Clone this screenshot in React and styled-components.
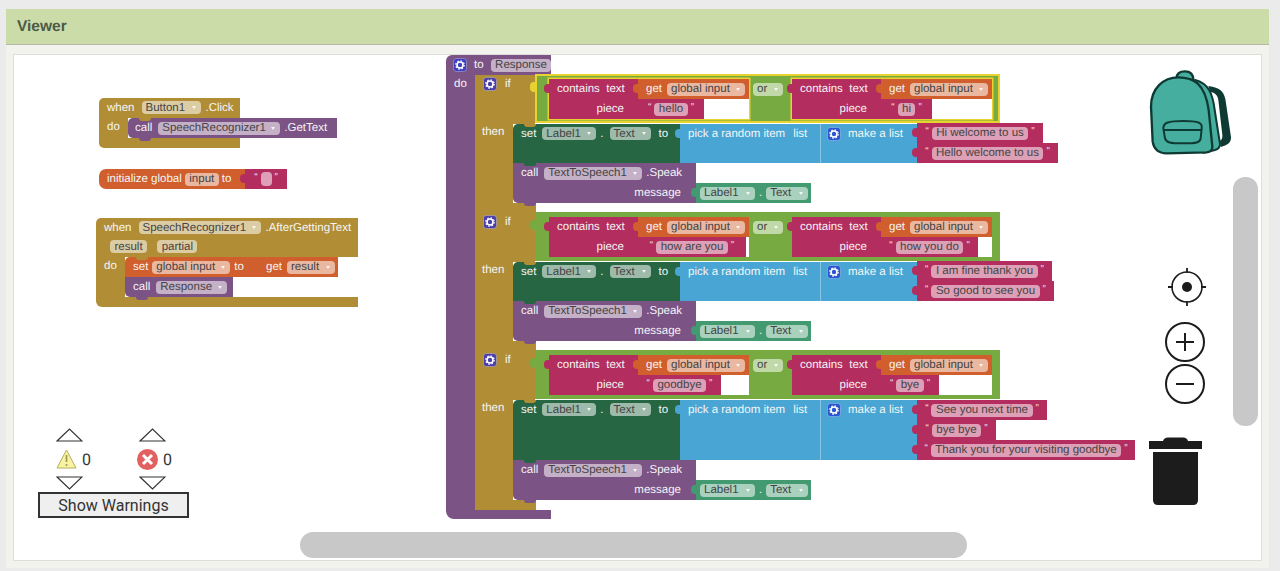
import React from "react";
import styled, { createGlobalStyle, css } from "styled-components";

const CONTROL = "#b18e35";
const PROC = "#7c5385";
const VAR = "#d05f2d";
const TEXT = "#b32d5e";
const LOGIC = "#77ab41";
const SET = "#266643";
const GETTER = "#439970";
const LIST = "#49a6d4";

const GlobalStyle = createGlobalStyle`
  body {
    margin: 0;
    background: #ebebeb;
    font-family: "Liberation Sans", Arial, sans-serif;
    text-rendering: geometricPrecision;
  }
`;

const Frame = styled.div`
  width: 1263px;
  height: 559px;
  margin: 9px 0 0 6px;
  background: #f3f3ee;
`;

const Header = styled.div`
  height: 36px;
  box-sizing: border-box;
  padding-left: 11px;
  display: flex;
  align-items: center;
  background: #cbdca8;
  border-bottom: 1px solid #b4b8a8;
  color: #4c5a48;
  font-size: 15.5px;
  font-weight: bold;
`;

const Workspace = styled.div`
  position: relative;
  width: 1247px;
  height: 505px;
  margin: 10px 0 0 8px;
  background: #fff;
  box-shadow: 0 0 0 1px #dfdfda;
  overflow: hidden;
`;

const Placed = styled.div`
  position: absolute;
  left: ${(p) => p.$x}px;
  top: ${(p) => p.$y}px;
`;

const Stack = styled.div`
  display: flex;
  flex-direction: column;
  align-items: flex-start;
  flex: none;
  margin-top: ${(p) => p.$lift || 0}px;
`;

const Line = styled.div`
  display: flex;
  align-items: stretch;
  flex: none;
`;

const Slab = styled.div`
  position: relative;
  flex: none;
  box-sizing: border-box;
  display: flex;
  align-items: ${(p) => (p.$top !== undefined ? "flex-start" : "center")};
  justify-content: ${(p) => p.$justify || "flex-start"};
  gap: ${(p) => p.$gap ?? 6}px;
  width: ${(p) => p.$w}px;
  height: ${(p) => (p.$h ? `${p.$h}px` : "auto")};
  padding: ${(p) => p.$top ?? 0}px ${(p) => p.$padR ?? 0}px ${(p) => p.$padB ?? 0}px ${(p) => p.$padL ?? 8}px;
  background: ${(p) => p.$bg};
  border-radius: ${(p) => p.$radius || 0};
  border-left: ${(p) => (p.$seam ? "1px solid rgba(255,255,255,.35)" : "none")};
  color: #f5f5f5;
  font-size: 11.5px;
  line-height: 14px;
  white-space: nowrap;

  ${(p) =>
    p.$tab &&
    css`
      &::before {
        content: "";
        position: absolute;
        left: -5px;
        top: 5px;
        width: 5px;
        height: 9px;
        background: ${p.$bg};
        border-radius: 4px 0 0 4px;
      }
    `}

  ${(p) =>
    p.$notch &&
    css`
      &::after {
        content: "";
        position: absolute;
        left: 11px;
        bottom: -3px;
        width: 12px;
        height: 3px;
        background: ${p.$bg};
        border-radius: 0 0 6px 6px;
        z-index: 2;
      }
    `}
`;

const Dent = styled.span`
  position: absolute;
  left: 11px;
  top: 0;
  width: 12px;
  height: 3px;
  background: ${(p) => p.$bg};
  border-radius: 0 0 6px 6px;
`;

const Suffix = styled.span`
  margin-left: -2px;
`;

const Spaced = styled.span`
  margin-left: 2px;
`;

const Chip = styled.span`
  display: inline-flex;
  align-items: center;
  flex: none;
  height: ${(p) => p.$h || 13}px;
  min-width: ${(p) => p.$min || 0}px;
  box-sizing: border-box;
  padding: 0 4.5px;
  border-radius: 4px;
  background: rgba(255, 255, 255, 0.55);
  color: #444;
`;

const Caret = styled.span`
  width: 0;
  height: 0;
  margin-left: auto;
  border-left: 2.5px solid transparent;
  border-right: 2.5px solid transparent;
  border-top: 3px solid rgba(255, 255, 255, 0.85);
`;

const FieldLabel = styled.span`
  margin-right: 5px;
`;

const FieldChip = styled(Chip)`
  padding: 0 5px 0 4px;
`;

const Quote = styled.span`
  font-size: 10px;
  line-height: 10px;
  margin-top: -3px;
`;

const Hole = styled.div`
  flex: none;
  width: ${(p) => p.$w}px;
  height: 20px;
  background: #fff;
`;

const GearBox = styled.svg`
  flex: none;
  width: 14px;
  height: 14px;
  display: block;
`;

const ConditionFrame = styled.div`
  position: relative;
  flex: none;
  box-sizing: border-box;
  display: flex;
  align-items: flex-start;
  width: 465px;
  height: 49px;
  margin-top: -1px;
  padding: 3px 0 0 12px;
  background: ${LOGIC};
  border: 2px solid ${(p) => (p.$selected ? "#e6d32f" : LOGIC)};

  &::before {
    content: "";
    position: absolute;
    left: -7px;
    top: 6px;
    width: 5px;
    height: 10px;
    background: ${(p) => (p.$selected ? "#e6d32f" : LOGIC)};
    border-radius: 4px 0 0 4px;
  }
`;

const ContainsGroup = styled.div`
  display: flex;
  flex: none;
  box-shadow: ${(p) => (p.$selected ? "0 0 0 1.5px #e6d32f" : "none")};
`;

const OrSlot = styled.div`
  flex: none;
  width: 43px;
  height: 20px;
  display: flex;
  align-items: center;
  padding-left: 4px;
  box-sizing: border-box;
  font-size: 11.5px;
`;

const WarnPanel = styled.div`
  position: absolute;
  left: 24px;
  top: 373px;
  width: 151px;
  display: flex;
  flex-direction: column;
`;

const Counters = styled.div`
  display: flex;
  padding-left: 18px;
`;

const Counter = styled.div`
  flex: none;
  width: 83px;
  display: flex;
  flex-direction: column;
  align-items: flex-start;
`;

const Arrow = styled.svg`
  display: block;
  width: 27px;
  height: 14px;
`;

const Status = styled.div`
  display: flex;
  align-items: center;
  height: 34px;
  margin-left: ${(p) => p.$shift || 0}px;
  gap: 5px;
  color: #333;
  font-family: Roboto, sans-serif;
  font-size: 16px;
`;

const ShowWarnings = styled.button`
  box-sizing: border-box;
  width: 151px;
  height: 26px;
  margin-top: 2px;
  padding: 0;
  background: #efefef;
  border: 2px solid #333;
  border-radius: 0;
  color: #333;
  font-family: Roboto, sans-serif;
  font-size: 16px;
`;

const Rail = styled.div`
  position: absolute;
  left: 1132px;
  top: 13px;
  width: 88px;
  display: flex;
  flex-direction: column;
  align-items: flex-start;
`;

const RailIcon = styled.svg`
  display: block;
  flex: none;
  margin: ${(p) => p.$top || 0}px 0 0 ${(p) => p.$left || 0}px;
`;

const VerticalThumb = styled.div`
  position: absolute;
  left: 1219px;
  top: 122px;
  width: 25px;
  height: 249px;
  border-radius: 12px;
  background: #c8c8c8;
`;

const HorizontalThumb = styled.div`
  position: absolute;
  left: 286px;
  top: 477px;
  width: 667px;
  height: 26px;
  border-radius: 13px;
  background: #c8c8c8;
`;

const Gear = ({ fill }) => (
  <GearBox viewBox="0 0 14 14">
    <rect x="0.5" y="0.5" width="13" height="13" rx="3" fill={fill} stroke="rgba(255,255,255,.3)" />
    <circle cx="7" cy="7" r="3" fill="none" stroke="#fff" strokeWidth="1.6" />
    <circle cx="7" cy="7" r="4.2" fill="none" stroke="#fff" strokeWidth="1.2" strokeDasharray="1.6 1.7" />
  </GearBox>
);

const Field = ({ children, min }) => (
  <FieldChip $min={min}>
    <FieldLabel>{children}</FieldLabel>
    <Caret />
  </FieldChip>
);

const TextBlock = ({ w, text, tab }) => (
  <Slab $w={w} $h={20} $bg={TEXT} $padL={0} $gap={3} $justify="center" $tab={tab}>
    <Quote>“</Quote>
    <Chip>{text}</Chip>
    <Quote>”</Quote>
  </Slab>
);

const Contains = ({ selected, text, w }) => (
  <ContainsGroup $selected={selected}>
    <Stack>
      <Slab $w={89} $h={20} $bg={TEXT} $tab $padL={8}>
        contains&nbsp; text
      </Slab>
      <Slab $w={89} $h={20} $bg={TEXT} $justify="flex-end" $padR={14}>
        piece
      </Slab>
    </Stack>
    <Stack>
      <Slab $w={111} $h={20} $bg={VAR} $tab $gap={5}>
        get <Field min={78}>global input</Field>
      </Slab>
      <Line>
        <TextBlock w={w} text={text} />
        <Hole $w={111 - w} />
      </Line>
    </Stack>
  </ContainsGroup>
);

const Getter = () => (
  <Slab $w={115} $h={20} $bg={GETTER} $tab $padL={4} $gap={4}>
    <Field min={55}>Label1</Field>
    <span>.</span>
    <Field min={42}>Text</Field>
  </Slab>
);

const IfSection = ({ section }) => (
  <Stack>
    <Line>
      <Slab $w={60} $h={49} $bg={CONTROL} $top={2} $padL={8} $gap={8}>
        <Gear fill="#4a3fa8" />
        if
      </Slab>
      <ConditionFrame $selected={section.selected}>
        <Contains selected={section.selected} text={section.left.text} w={section.left.w} />
        <OrSlot>
          <Field min={30}>or</Field>
        </OrSlot>
        <Contains selected={section.selected} text={section.right.text} w={section.right.w} />
      </ConditionFrame>
    </Line>
    <Line>
      <Slab $w={38} $bg={CONTROL} $top={1} $padL={7}>
        then
      </Slab>
      <Stack>
        <Line>
          <Slab $w={167} $h={section.setH} $bg={SET} $top={3} $radius="5px 0 0 0" $notch>
            <Dent $bg={CONTROL} />
            set <Field min={54}>Label1</Field>
            <Suffix>.</Suffix>
            <Field min={41}>Text</Field>
            <Spaced>to</Spaced>
          </Slab>
          <Slab $w={140} $h={section.setH} $bg={LIST} $top={3} $tab $gap={8}>
            <span>pick a random item</span>
            <span>list</span>
          </Slab>
          <Slab $w={97} $h={section.setH} $bg={LIST} $top={3} $seam $padL={6} $gap={7}>
            <Gear fill="#2b55d0" />
            make a list
          </Slab>
          <Stack $lift={section.lift}>
            {section.items.map((item) => (
              <TextBlock key={item.text} w={item.w} text={item.text} tab />
            ))}
          </Stack>
        </Line>
        <Slab $w={183} $h={20} $bg={PROC}>
          <Dent $bg={SET} />
          call <Field min={98}>TextToSpeech1</Field>
          <Suffix>.Speak</Suffix>
        </Slab>
        <Line>
          <Slab $w={183} $h={20} $bg={PROC} $justify="flex-end" $padR={15} $radius="0 0 0 5px" $notch>
            message
          </Slab>
          <Getter />
        </Line>
      </Stack>
    </Line>
    <Slab $w={61} $h={10} $bg={CONTROL} />
  </Stack>
);

const sections = [
  {
    selected: true,
    lift: -1,
    setH: 39,
    left: { text: "hello", w: 66 },
    right: { text: "hi", w: 51 },
    items: [
      { text: "Hi welcome to us", w: 126 },
      { text: "Hello welcome to us", w: 141 },
    ],
  },
  {
    lift: -1,
    setH: 39,
    left: { text: "how are you", w: 108 },
    right: { text: "how you do", w: 97 },
    items: [
      { text: "I am fine thank you", w: 135 },
      { text: "So good to see you", w: 137 },
    ],
  },
  {
    lift: 0,
    setH: 60,
    left: { text: "goodbye", w: 83 },
    right: { text: "bye", w: 58 },
    items: [
      { text: "See you next time", w: 130 },
      { text: "bye bye", w: 79 },
      { text: "Thank you for your visiting goodbye", w: 218 },
    ],
  },
];

const Backpack = () => (
  <RailIcon width="88" height="90" viewBox="48 54 264 270">
    <path
      d="M235 108 C270 112 285 125 288 160 L303 262 C304 277 292 287 272 291 L270 272 C275 270 278 264 277 255 L265 150 C263 135 255 128 240 125 Z"
      fill="#0f3a33"
    />
    <path
      d="M140 84 C140 70 150 64 165 64 C180 64 190 72 190 90 Z"
      fill="#46ae9f"
      stroke="#0f3a33"
      strokeWidth="7"
    />
    <path
      d="M195 90 C235 100 248 130 254 180 L270 282 Q270 296 255 300 L220 308 Z"
      fill="#46ae9f"
      stroke="#0f3a33"
      strokeWidth="6"
      strokeLinejoin="round"
    />
    <path
      d="M63 170 C63 115 100 82 145 82 C190 82 225 100 236 180 L247 290 Q248 305 230 307 L110 310 C85 310 72 300 68 275 Z"
      fill="#46ae9f"
      stroke="#0f3a33"
      strokeWidth="7"
      strokeLinejoin="round"
    />
    <path
      d="M100 235 C100 218 115 213 160 213 C205 213 218 218 215 235 L212 265 C210 278 200 280 160 280 C120 280 108 278 105 265 Z"
      fill="#46ae9f"
      stroke="#0f3a33"
      strokeWidth="6"
    />
    <path d="M102 240 L215 240" stroke="#0f3a33" strokeWidth="6" />
  </RailIcon>
);

const UpArrow = () => (
  <Arrow viewBox="0 0 27 14">
    <path d="M1 13 L13.5 1 L26 13 Z" fill="none" stroke="#333" strokeWidth="1.2" />
  </Arrow>
);

const DownArrow = () => (
  <Arrow viewBox="0 0 27 14">
    <path d="M1 1 L13.5 13 L26 1 Z" fill="none" stroke="#333" strokeWidth="1.2" />
  </Arrow>
);

export default function App() {
  return (
    <>
      <GlobalStyle />
      <Frame>
        <Header>Viewer</Header>
        <Workspace>
          <Placed $x={85} $y={43}>
            <Stack>
              <Slab $w={141} $h={20} $bg={CONTROL} $radius="5px 0 0 0" $gap={7} $padB={1}>
                when <Field min={59}>Button1</Field>
                <Suffix>.Click</Suffix>
              </Slab>
              <Line>
                <Slab $w={29} $h={20} $bg={CONTROL} $padB={2}>
                  do
                </Slab>
                <Slab $w={209} $h={20} $bg={PROC} $radius="5px 0 0 5px" $notch $padL={7}>
                  <Dent $bg={CONTROL} />
                  call <Field min={122}>SpeechRecognizer1</Field>
                  <Suffix>.GetText</Suffix>
                </Slab>
              </Line>
              <Slab $w={141} $h={10} $bg={CONTROL} $radius="0 0 0 5px" />
            </Stack>
          </Placed>

          <Placed $x={85} $y={114}>
            <Line>
              <Slab $w={146} $h={20} $bg={VAR} $radius="7px 0 0 7px" $gap={3}>
                initialize global <Chip>input</Chip> to
              </Slab>
              <Slab $w={42} $h={20} $bg={TEXT} $tab $padL={0} $gap={3} $justify="center">
                <Quote>“</Quote>
                <Chip $h={14} $min={11} />
                <Quote>”</Quote>
              </Slab>
            </Line>
          </Placed>

          <Placed $x={82} $y={163}>
            <Stack>
              <Slab $w={262} $h={20} $bg={CONTROL} $radius="5px 0 0 0" $gap={7} $padB={1}>
                when <Field min={122}>SpeechRecognizer1</Field>
                <Suffix>.AfterGettingText</Suffix>
              </Slab>
              <Slab $w={262} $h={19} $bg={CONTROL} $padL={14} $gap={10} $padB={2}>
                <Chip>result</Chip>
                <Chip>partial</Chip>
              </Slab>
              <Line>
                <Slab $w={29} $bg={CONTROL} $top={2}>
                  do
                </Slab>
                <Stack>
                  <Line>
                    <Slab $w={133} $h={20} $bg={VAR} $radius="5px 0 0 0" $gap={4}>
                      <Dent $bg={CONTROL} />
                      set <Field min={78}>global input</Field> to
                    </Slab>
                    <Slab $w={80} $h={20} $bg={VAR} $tab $gap={5}>
                      get <Field min={48}>result</Field>
                    </Slab>
                  </Line>
                  <Slab $w={108} $h={20} $bg={PROC} $radius="0 0 0 5px" $notch>
                    call <Field min={71}>Response</Field>
                  </Slab>
                </Stack>
              </Line>
              <Slab $w={262} $h={10} $bg={CONTROL} $radius="0 0 0 6px" />
            </Stack>
          </Placed>

          <Placed $x={432} $y={0}>
            <Stack>
              <Slab $w={105} $h={20} $bg={PROC} $radius="6px 0 0 0" $padL={7} $gap={7}>
                <Gear fill="#3f3fc0" />
                to <Chip>Response</Chip>
              </Slab>
              <Line>
                <Slab $w={29} $bg={PROC} $top={2}>
                  do
                </Slab>
                <Stack>
                  {sections.map((section) => (
                    <IfSection key={section.left.text} section={section} />
                  ))}
                </Stack>
              </Line>
              <Slab $w={105} $h={9} $bg={PROC} $radius="0 0 0 8px" />
            </Stack>
          </Placed>

          <WarnPanel>
            <Counters>
              <Counter>
                <UpArrow />
                <Status>
                  <svg width="21" height="20" viewBox="0 0 21 20">
                    <path
                      d="M10.5 1 L20 19 H1 Z"
                      fill="#f7f3a3"
                      stroke="#b5b05a"
                      strokeLinejoin="round"
                    />
                    <path d="M10.5 6 V13" stroke="#9a9650" strokeWidth="1.6" />
                    <circle cx="10.5" cy="16" r="1" fill="#9a9650" />
                  </svg>
                  0
                </Status>
                <DownArrow />
              </Counter>
              <Counter>
                <UpArrow />
                <Status $shift={-2}>
                  <svg width="21" height="21" viewBox="0 0 21 21">
                    <circle cx="10.5" cy="10.5" r="10.5" fill="#e26060" />
                    <path d="M6 6 L15 15 M15 6 L6 15" stroke="#fff" strokeWidth="3" />
                  </svg>
                  0
                </Status>
                <DownArrow />
              </Counter>
            </Counters>
            <ShowWarnings>Show Warnings</ShowWarnings>
          </WarnPanel>

          <Rail>
            <Backpack />
            <RailIcon width="40" height="40" viewBox="0 0 40 40" $top={109} $left={21}>
              <circle cx="20" cy="20" r="15" fill="none" stroke="#1c1c1c" strokeWidth="1.6" />
              <circle cx="20" cy="20" r="5" fill="#1c1c1c" />
              <path d="M20 1 V6 M20 34 V39 M1 20 H6 M34 20 H39" stroke="#1c1c1c" strokeWidth="1.8" />
            </RailIcon>
            <RailIcon width="42" height="42" viewBox="0 0 42 42" $top={14} $left={18}>
              <circle cx="21" cy="21" r="19" fill="none" stroke="#1c1c1c" strokeWidth="2" />
              <path d="M12 21 H30 M21 12 V30" stroke="#1c1c1c" strokeWidth="2" />
            </RailIcon>
            <RailIcon width="42" height="42" viewBox="0 0 42 42" $left={18}>
              <circle cx="21" cy="21" r="19" fill="none" stroke="#1c1c1c" strokeWidth="2" />
              <path d="M12 21 H30" stroke="#1c1c1c" strokeWidth="2" />
            </RailIcon>
            <RailIcon width="53" height="68" viewBox="0 0 53 68" $top={32} $left={3}>
              <path d="M14 4 Q15 0.5 19 0.5 H34 Q38 0.5 39 4 Z" fill="#1c1c1c" />
              <rect x="0" y="4" width="53" height="8" fill="#1c1c1c" />
              <path d="M4 15 H49 V63 Q49 68 44 68 H9 Q4 68 4 63 Z" fill="#1c1c1c" />
            </RailIcon>
          </Rail>

          <VerticalThumb />
          <HorizontalThumb />
        </Workspace>
      </Frame>
    </>
  );
}
